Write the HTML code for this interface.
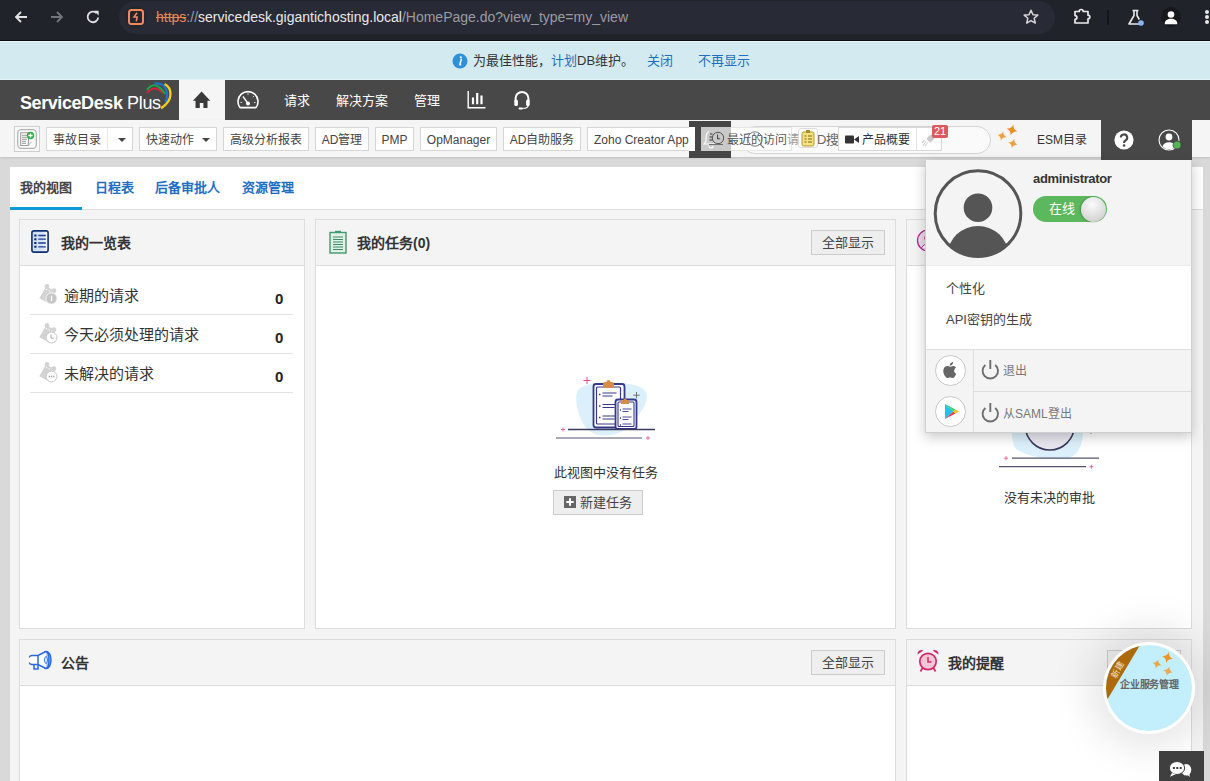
<!DOCTYPE html>
<html lang="zh-CN">
<head>
<meta charset="utf-8">
<style>
*{box-sizing:border-box;margin:0;padding:0}
html,body{width:1210px;height:781px;overflow:hidden}
body{position:relative;font-family:"Liberation Sans",sans-serif;font-size:13px;color:#333;background:#d9d9d9}
.a{position:absolute}
.ic{position:absolute;display:block}
/* browser bar */
#chrome{left:0;top:0;width:1210px;height:40px;background:#21232b}
#chrome-line{left:0;top:40px;width:1210px;height:1px;background:#0b0c0f}
#omni{left:119px;top:1px;width:936px;height:33px;border-radius:17px;background:#282a35}
#url{left:156px;top:8px;font-size:14px;color:#e8e8ea;white-space:nowrap;line-height:18px}
#url .o{color:#e8875a;text-decoration:line-through}
#url .g{color:#9a9ca3}
/* banner */
#banner{left:0;top:41px;width:1210px;height:39px;background:#d3ebf0;border-top:1px solid #e4f6fa;border-bottom:1px solid #e2f4f8}
.bt{top:52px;line-height:17px;font-size:13px;color:#333;white-space:nowrap}
.blue{color:#1e6fbf}
/* nav */
#nav{left:0;top:80px;width:1210px;height:40px;background:#484848}
#home{left:179px;top:80px;width:46px;height:40px;background:#f5f5f5}
.nt{top:93px;color:#fff;font-size:13px;line-height:16px;white-space:nowrap}
/* toolbar */
#tb{left:0;top:120px;width:1210px;height:37px;background:#f5f5f5;box-shadow:0 1px 2px rgba(0,0,0,.12)}
.btn{position:absolute;top:127px;height:24px;background:#fff;border:1px solid #d6d6d6;font-size:12px;color:#444;line-height:22px;white-space:nowrap;text-align:center}
.lat{letter-spacing:-0.4px;font-size:13px}
.cj{line-height:25px}
/* content */
#content{left:10px;top:209px;width:1193px;height:572px;background:#f4f4f4}
#tabs{left:10px;top:167px;width:1193px;height:43px;background:#fff;border-bottom:1px solid #dcdcdc}
.tab{top:180px;font-size:13px;font-weight:bold;line-height:16px;color:#1f6fc5;white-space:nowrap}
.panel{position:absolute;background:#fff;border:1px solid #dcdcdc}
.ph{position:absolute;left:0;top:0;right:0;height:46px;background:#f4f4f4;border-bottom:1px solid #dcdcdc}
.pt{position:absolute;font-size:14px;font-weight:bold;color:#333;line-height:17px;white-space:nowrap}
.rowt{font-size:15px;line-height:20px;color:#333;white-space:nowrap}
.rown{font-size:15px;font-weight:bold;line-height:20px;color:#222}
.ctr{font-size:13px;line-height:16px;color:#333;white-space:nowrap}
.sbtn{position:absolute;height:25px;background:#eee;border:1px solid #ccc;font-size:13px;line-height:23px;color:#444;text-align:center;white-space:nowrap}
</style>
</head>
<body>
<!-- Browser chrome -->
<div class="a" id="chrome"></div>
<div class="a" id="chrome-line"></div>
<div class="a" id="omni"></div>
<div class="a" id="url"><span class="o">https</span><span class="g">://</span>servicedesk.gigantichosting.local<span class="g">/HomePage.do?view_type=my_view</span></div>


<!-- chrome icons -->
<svg class="ic" style="left:13px;top:9px" width="16" height="16" viewBox="0 0 16 16"><path d="M14 8H3M8 3L3 8l5 5" fill="none" stroke="#e3e3e3" stroke-width="1.8"/></svg>
<svg class="ic" style="left:49px;top:9px" width="16" height="16" viewBox="0 0 16 16"><path d="M2 8h11M8 3l5 5-5 5" fill="none" stroke="#74767c" stroke-width="1.8"/></svg>
<svg class="ic" style="left:85px;top:9px" width="16" height="16" viewBox="0 0 16 16"><path d="M13.2 8.5A5.3 5.3 0 1 1 11.5 4" fill="none" stroke="#e3e3e3" stroke-width="1.8"/><path d="M9 1.8h4.6v4.6z" fill="#e3e3e3"/></svg>
<div class="a" style="left:125px;top:6px;width:22px;height:22px;border-radius:11px;background:#24262e"></div>
<svg class="ic" style="left:127px;top:8px" width="18" height="18" viewBox="0 0 18 18"><rect x="2" y="2" width="14" height="14" rx="2.5" fill="none" stroke="#ee8c5d" stroke-width="2"/><path d="M10 4.8L7 9h3.2l-1 4.4" fill="none" stroke="#ee8c5d" stroke-width="1.5"/></svg>
<svg class="ic" style="left:1022px;top:8px" width="18" height="18" viewBox="0 0 18 18"><path d="M9 2.2l2 4.5 4.8.4-3.6 3.2 1.1 4.8L9 12.6l-4.3 2.5 1.1-4.8-3.6-3.2 4.8-.4z" fill="none" stroke="#d6d6d8" stroke-width="1.5" stroke-linejoin="round"/></svg>
<svg class="ic" style="left:1073px;top:7px" width="18" height="19" viewBox="0 0 18 19"><path d="M2 4.5h4.2a2 2 0 0 1 4 0H15v3.7a1.8 1.8 0 0 1 0 3.6V16H2v-3.6a1.9 1.9 0 0 0 0-3.8z" fill="none" stroke="#eaeaea" stroke-width="1.7" stroke-linejoin="round"/></svg>
<div class="a" style="left:1107px;top:10px;width:2px;height:15px;background:#15161a"></div>
<svg class="ic" style="left:1127px;top:9px" width="18" height="17" viewBox="0 0 18 17"><path d="M5.5 1.5h6M7 1.5v5L2 15h10.5M10 1.5v5l2.3 4" fill="none" stroke="#eaeaea" stroke-width="1.6" stroke-linejoin="round"/><circle cx="14" cy="14" r="2.8" fill="#8ab4f8"/></svg>
<div class="a" style="left:1161px;top:7px;width:20px;height:20px;border-radius:10px;background:#17181c"></div>
<svg class="ic" style="left:1161px;top:7px" width="20" height="20" viewBox="0 0 20 20"><circle cx="10" cy="7.5" r="3.3" fill="#fff"/><path d="M3.8 16.2c0-3 3-4.5 6.2-4.5s6.2 1.5 6.2 4.5v1.1H3.8z" fill="#fff"/></svg>
<div class="a" style="left:1205px;top:10px;width:4px;height:4px;border-radius:2px;background:#eaeaea"></div>
<div class="a" style="left:1205px;top:15px;width:4px;height:4px;border-radius:2px;background:#eaeaea"></div>
<div class="a" style="left:1205px;top:20px;width:4px;height:4px;border-radius:2px;background:#eaeaea"></div>

<!-- Banner -->
<div class="a" id="banner"></div>
<div class="a bt" style="left:473px">为最佳性能，<span class="blue">计划</span>DB维护。</div>
<div class="a bt blue" style="left:647px">关闭</div>
<div class="a bt blue" style="left:698px">不再显示</div>

<svg class="ic" style="left:452px;top:53px" width="16" height="16" viewBox="0 0 16 16"><circle cx="8" cy="8" r="7.5" fill="#2f8fd8"/><circle cx="8.8" cy="4.3" r="1.1" fill="#fff"/><path d="M9.2 6.6L7.9 11.4c-.1.5.3.6.7.3" fill="none" stroke="#fff" stroke-width="1.6" stroke-linecap="round"/></svg>
<!-- Nav -->
<div class="a" id="nav"></div>
<div class="a" id="home"></div>
<div class="a nt" style="left:284px">请求</div>
<div class="a nt" style="left:336px">解决方案</div>
<div class="a nt" style="left:414px">管理</div>

<div class="a" style="left:20px;top:93px;font-size:18px;line-height:20px;color:#fff;white-space:nowrap;font-weight:bold;letter-spacing:-0.42px">ServiceDesk</div>
<div class="a" style="left:127px;top:93px;font-size:18px;line-height:20px;color:#fff;white-space:nowrap;letter-spacing:-0.3px">Plus</div>
<svg class="ic" style="left:140px;top:78px" width="40" height="34" viewBox="0 0 40 34"><path d="M7 14.9Q14.35 5.8 23.1 15.1" fill="none" stroke="#d0243a" stroke-width="2"/><path d="M7 11.9Q15.4 1.05 25.1 15.9" fill="none" stroke="#1aa64a" stroke-width="2"/><path d="M14.7 5.5C24 4.5 30 12 25.6 24.3" fill="none" stroke="#1f73cf" stroke-width="2.3"/><path d="M24.6 6C32 10 34 22 21.1 30.3" fill="none" stroke="#f3cf17" stroke-width="2.3"/></svg>
<svg class="ic" style="left:192px;top:91px" width="19" height="18" viewBox="0 0 19 18"><path d="M9.6 0.5L0.9 9.7h2.6V17h4.3v-5h3.6v5h4.1V9.7h2.8z" fill="#3a3a3a"/></svg>
<svg class="ic" style="left:237px;top:90px" width="22" height="20" viewBox="0 0 22 20"><path d="M3 17.6A10 10 0 1 1 19 17.6Z" fill="none" stroke="#fff" stroke-width="1.6" stroke-linejoin="round"/><path d="M6 6.5L11 13.5" stroke="#fff" stroke-width="1.3"/><circle cx="11" cy="13.5" r="2" fill="#fff"/><path d="M11 3.3v1.5M16.8 6.2l-.9.9M3.5 12.5h1.4M17.1 12.5h1.4" stroke="#fff" stroke-width="0.9"/></svg>
<svg class="ic" style="left:467px;top:90px" width="19" height="19" viewBox="0 0 19 19"><path d="M1.2 1V17.7H18.5" fill="none" stroke="#fff" stroke-width="1.4"/><path d="M6 7.4V14.3M10.2 3V14.3M14.5 5.4V14.3" stroke="#fff" stroke-width="2.2"/></svg>
<svg class="ic" style="left:513px;top:90px" width="18" height="20" viewBox="0 0 18 20"><path d="M2.6 11V8.3a6.4 6.4 0 0 1 12.8 0V11" fill="none" stroke="#fff" stroke-width="2"/><rect x="1.3" y="9.6" width="3.6" height="6.4" rx="1.6" fill="#fff"/><rect x="13.1" y="9.6" width="3.6" height="6.4" rx="1.6" fill="#fff"/><path d="M15.2 15.5c-.3 2-2.3 2.8-5 2.9" fill="none" stroke="#fff" stroke-width="1.3"/><rect x="5.5" y="17.4" width="4.5" height="2" rx="1" fill="#fff"/></svg>
<!-- Toolbar -->
<div class="a" id="tb"></div>
<div class="btn" style="left:14px;top:126px;width:26px;height:26px;background:#f8f8f8;border-color:#cfcfcf"></div>
<svg class="ic" style="left:17px;top:129px" width="20" height="20" viewBox="0 0 20 20"><rect x="0.7" y="0.7" width="18.6" height="18.6" rx="3.5" fill="#fbfbfb" stroke="#b4b4b4" stroke-width="1.3"/><path d="M3.7 3.8h8v6l-0.5 6.7H3.7z" fill="#fff" stroke="#9a9a9a" stroke-width="1.1"/><path d="M5 6.3h5M5 8.3h5M5 10.3h5M5 12.3h4M5 14.3h4" stroke="#8a8a8a" stroke-width="0.9"/><path d="M11.2 16.5l3.2-3.6" stroke="#aaa" stroke-width="0.9"/><circle cx="13.5" cy="6.5" r="3.7" fill="#2db14f"/><path d="M13.5 4.4v4.2M11.4 6.5h4.2" stroke="#fff" stroke-width="1.3"/></svg>
<div class="btn" style="left:46px;width:87px"><span style="position:absolute;left:6px;top:0;line-height:25px">事故目录</span></div>
<div class="a" style="left:107px;top:128px;width:1px;height:22px;background:#e8e8e8"></div>
<svg class="ic" style="left:118px;top:138px" width="8" height="4" viewBox="0 0 8 4"><path d="M0 0h8L4 4z" fill="#444"/></svg>
<div class="btn" style="left:139px;width:78px"><span style="position:absolute;left:6px;top:0;line-height:25px">快速动作</span></div>
<svg class="ic" style="left:202px;top:138px" width="8" height="4" viewBox="0 0 8 4"><path d="M0 0h8L4 4z" fill="#444"/></svg>
<div class="btn cj" style="left:223px;width:86px">高级分析报表</div>
<div class="btn cj" style="left:315px;width:54px">AD管理</div>
<div class="btn" style="left:375px;width:39px;line-height:24px">PMP</div>
<div class="btn" style="left:420px;width:77px;line-height:24px">OpManager</div>
<div class="btn cj" style="left:503px;width:78px">AD自助服务</div>
<div class="btn" style="left:587px;width:108px;text-align:left;padding-left:6px;line-height:24px">Zoho Creator App</div>
<div class="a" style="left:689px;top:121px;width:42px;height:37px;background:#454545"></div>
<div class="a" style="left:689px;top:127px;width:6px;height:24px;background:#fff"></div>
<div class="a" style="left:701px;top:127px;width:30px;height:24px;background:#c9c9c9"></div>
<svg class="ic" style="left:703px;top:129px" width="34" height="20" viewBox="0 0 34 20"><path d="M6 2.5c-2.5 1-3 4-3 7v3L1 15h14" fill="none" stroke="#fff" stroke-width="1.1"/><path d="M6 17a2 2 0 0 0 4 0" fill="none" stroke="#fff" stroke-width="1.1"/><path d="M7 5h2.5M6.5 8h3M6.5 11h3" stroke="#666" stroke-width="1.4"/><circle cx="15" cy="9" r="5.7" fill="none" stroke="#555" stroke-width="1"/><path d="M14.6 5.6v4.2h2.6" fill="none" stroke="#444" stroke-width="1.1"/><path d="M6 15.5h14" stroke="#555" stroke-width="0.8"/></svg>
<div class="a" style="left:741px;top:126px;width:250px;height:28px;border:1px solid #d4d4d4;border-radius:14px;background:#fafafa"></div>
<div class="a" style="left:731px;top:127px;width:61px;height:24px;background:#fff;border:1px solid #e6e6e6;border-left:none"></div>
<div class="a" style="left:727px;top:132px;font-size:12px;line-height:16px;color:#555;white-space:nowrap">最近的访问</div>
<svg class="ic" style="left:745px;top:129px" width="22" height="22" viewBox="0 0 22 22"><circle cx="10" cy="10" r="7.2" fill="none" stroke="#777" stroke-width="1"/><path d="M15 15l4 4" stroke="#777" stroke-width="1.2"/></svg>
<div class="a" style="left:787px;top:132px;font-size:12px;line-height:16px;color:#999;white-space:nowrap">请</div>
<div class="a" style="left:817px;top:132px;font-size:13px;line-height:16px;color:#666;white-space:nowrap">D搜</div>
<div class="a" style="left:798px;top:128px;width:20px;height:20px;background:#fff;border:1px solid #ddd;border-radius:3px"></div>
<svg class="ic" style="left:800px;top:129px" width="16" height="18" viewBox="0 0 16 18"><rect x="2" y="3" width="12" height="14" rx="1.5" fill="#f6e27a" stroke="#a88d2c" stroke-width="0.9"/><rect x="6" y="1" width="4" height="3" fill="#a88d2c"/><path d="M4.5 7h2M8 7h4M4.5 10h2M8 10h4M4.5 13h2M8 13h4" stroke="#6e5b1d" stroke-width="0.9"/></svg>
<div class="a" style="left:838px;top:127px;width:104px;height:24px;background:#fff;border:1px solid #d8d8d8"></div>
<div class="a" style="left:916px;top:128px;width:1px;height:22px;background:#e4e4e4"></div>
<svg class="ic" style="left:845px;top:135px" width="14" height="9" viewBox="0 0 14 9"><rect x="0" y="0.5" width="9" height="8" rx="1" fill="#333"/><path d="M9 4.5l5-3.5v7z" fill="#333"/></svg>
<div class="a" style="left:862px;top:132px;font-size:12px;line-height:16px;color:#333;white-space:nowrap">产品概要</div>
<svg class="ic" style="left:921px;top:132px" width="16" height="16" viewBox="0 0 16 16"><path d="M13 2c-3 0-6 2-7.5 5l3.5 3.5C12 9 14 6 14 3z" fill="#c8c8c8"/><path d="M5 9l-3 5M6.5 10.5l-2.5 4M3.5 8l-2.5 3" stroke="#d6d6d6" stroke-width="1.2"/></svg>
<div class="a" style="left:932px;top:125px;width:16px;height:13px;background:#dc5a5a;border-radius:2px;color:#fff;font-size:11px;line-height:13px;text-align:center">21</div>
<svg class="ic" style="left:990px;top:120px" width="34" height="34" viewBox="0 0 34 34"><path transform="translate(22,10) rotate(15)" d="M0 -5.6Q0.78 -0.78 5.6 0Q0.78 0.78 0 5.6Q-0.78 0.78 -5.6 0Q-0.78 -0.78 0 -5.6Z" fill="#ee8e1c"/><path transform="translate(12,16) rotate(15)" d="M0 -4.8Q0.67 -0.67 4.8 0Q0.67 0.67 0 4.8Q-0.67 0.67 -4.8 0Q-0.67 -0.67 0 -4.8Z" fill="#f0a040"/><path transform="translate(23,23.5) rotate(15)" d="M0 -5Q0.70 -0.70 5 0Q0.70 0.70 0 5Q-0.70 0.70 -5 0Q-0.70 -0.70 0 -5Z" fill="#f0a040"/></svg>
<div class="a" style="left:1037px;top:132px;font-size:12px;line-height:16px;color:#333;white-space:nowrap">ESM目录</div>
<div class="a" style="left:1101px;top:80px;width:91px;height:80px;background:#484848"></div>
<svg class="ic" style="left:1114px;top:130px" width="20" height="20" viewBox="0 0 20 20"><circle cx="10" cy="10" r="9.6" fill="#fff"/><path d="M6.8 7.6a3.2 3.2 0 1 1 4.6 2.9c-.9.5-1.3 1-1.3 2v.6" fill="none" stroke="#484848" stroke-width="2.1"/><circle cx="10.1" cy="15.5" r="1.3" fill="#484848"/></svg>
<svg class="ic" style="left:1157px;top:128px" width="26" height="26" viewBox="0 0 26 26"><circle cx="12" cy="12" r="10" fill="none" stroke="#fff" stroke-width="1.1"/><circle cx="12" cy="9" r="3.4" fill="#fff"/><path d="M5.5 18.5c1-3 3.5-4.3 6.5-4.3s5.5 1.3 6.5 4.3A9 9 0 0 1 5.5 18.5z" fill="#fff"/><circle cx="20" cy="17" r="4.4" fill="#484848"/><circle cx="20" cy="17" r="3.6" fill="#4fb852"/></svg>


<!-- Content -->
<div class="a" id="content"></div>
<div class="a" id="tabs"></div>
<div class="a" style="left:10px;top:207px;width:72px;height:3px;background:#0e9ad8"></div>
<div class="a tab" style="left:20px;color:#444">我的视图</div>
<div class="a tab" style="left:95px">日程表</div>
<div class="a tab" style="left:155px">后备审批人</div>
<div class="a tab" style="left:242px">资源管理</div>

<!-- Panel 1 -->
<div class="panel" style="left:19px;top:219px;width:286px;height:410px">
 <div class="ph"></div>
</div>
<svg class="ic" style="left:31px;top:230px" width="18" height="23" viewBox="0 0 18 23"><defs><linearGradient id="lg1" x1="0" x2="1"><stop offset="0" stop-color="#c9dbf5"/><stop offset="0.7" stop-color="#dae6f8"/><stop offset="1" stop-color="#fff"/></linearGradient></defs><rect x="0.9" y="0.9" width="16.2" height="21.2" rx="2" fill="url(#lg1)" stroke="#10306f" stroke-width="1.6"/><path d="M3.3 5.5h2.2M3.3 9.2h2.2M3.3 13h2.2M3.3 16.8h2.2" stroke="#0d2a7a" stroke-width="2"/><path d="M7.3 5.5h7.5M7.3 9.2h7.5M7.3 13h7.5M7.3 16.8h7.5" stroke="#173e94" stroke-width="1.3"/></svg>
<div class="pt" style="left:61px;top:235px">我的一览表</div>
<div class="a" style="left:30px;top:314px;width:263px;height:1px;background:#e3e3e3"></div>
<div class="a" style="left:30px;top:353px;width:263px;height:1px;background:#e3e3e3"></div>
<div class="a" style="left:30px;top:392px;width:263px;height:1px;background:#e3e3e3"></div>
<div class="a rowt" style="left:64px;top:286px">逾期的请求</div>
<div class="a rowt" style="left:64px;top:325px">今天必须处理的请求</div>
<div class="a rowt" style="left:64px;top:364px">未解决的请求</div>
<div class="a rown" style="left:275px;top:289px">0</div>
<div class="a rown" style="left:275px;top:328px">0</div>
<div class="a rown" style="left:275px;top:367px">0</div>
<svg class="ic" style="left:34px;top:280px" width="30" height="30" viewBox="0 0 30 30"><path d="M12.2 6.2L21.5 11.6L15.6 23.8L5.3 18.2Z" fill="#d3d3d3"/><circle cx="13" cy="6.2" r="2.3" fill="#d3d3d3"/><circle cx="20" cy="10.6" r="2.3" fill="#d3d3d3"/><path d="M12 9.3L19.5 13.2" stroke="#fff" stroke-width="1" stroke-dasharray="1.4 1.6"/><circle cx="17.5" cy="18.5" r="5.6" fill="#c6c6c6" stroke="#fff" stroke-width="0.8"/><path d="M17.5 15.6v5.6" stroke="#fff" stroke-width="1.3"/></svg>
<svg class="ic" style="left:34px;top:319px" width="30" height="30" viewBox="0 0 30 30"><path d="M12.2 6.2L21.5 11.6L15.6 23.8L5.3 18.2Z" fill="#d3d3d3"/><circle cx="13" cy="6.2" r="2.3" fill="#d3d3d3"/><circle cx="20" cy="10.6" r="2.3" fill="#d3d3d3"/><path d="M12 9.3L19.5 13.2" stroke="#fff" stroke-width="1" stroke-dasharray="1.4 1.6"/><circle cx="17.5" cy="18.5" r="5.4" fill="#fff" stroke="#c6c6c6" stroke-width="1"/><path d="M17 15.5v3.6h2.6" fill="none" stroke="#aaa" stroke-width="1"/></svg>
<svg class="ic" style="left:34px;top:358px" width="30" height="30" viewBox="0 0 30 30"><path d="M12.2 6.2L21.5 11.6L15.6 23.8L5.3 18.2Z" fill="#d3d3d3"/><circle cx="13" cy="6.2" r="2.3" fill="#d3d3d3"/><circle cx="20" cy="10.6" r="2.3" fill="#d3d3d3"/><path d="M12 9.3L19.5 13.2" stroke="#fff" stroke-width="1" stroke-dasharray="1.4 1.6"/><circle cx="17.5" cy="18.5" r="5.4" fill="#fff" stroke="#c6c6c6" stroke-width="1"/><path d="M14.8 18.5h1.2M17 18.5h1.2M19.2 18.5h1.2" stroke="#999" stroke-width="1.3"/></svg>

<!-- Panel 2 -->
<div class="panel" style="left:315px;top:219px;width:581px;height:410px">
 <div class="ph"></div>
</div>
<svg class="ic" style="left:329px;top:229px" width="18" height="25" viewBox="0 0 18 25"><rect x="1" y="3.5" width="16" height="20.5" fill="#dff0e6" stroke="#3f9a6e" stroke-width="1.4"/><path d="M6 4V1.8h6V4z" fill="#3f9a6e"/><path d="M4 8h10M4 10.5h10M4 13h10M4 15.5h10M4 18h10M4 20.5h10" stroke="#3f8a65" stroke-width="1.1"/></svg>
<div class="pt" style="left:357px;top:235px">我的任务(0)</div>
<div class="sbtn" style="left:811px;top:230px;width:74px">全部显示</div>
<svg class="ic" style="left:550px;top:370px" width="110" height="75" viewBox="550 370 110 75">
<path d="M578 390c8-8 28-8 42-7 18 1 28 6 27 14-1 12-12 22-20 30-6 7-18 10-28 8-12-2-18-12-21-24-2-8-3-15 0-21z" fill="#dcf0fb"/>
<rect x="593.5" y="384" width="31" height="43.5" rx="2.5" fill="#fff" stroke="#34398c" stroke-width="1.8"/>
<rect x="596.5" y="387" width="24" height="37" rx="1" fill="#fff" stroke="#34398c" stroke-width="1.2"/>
<path d="M603 388v-4a2 2 0 0 1 2-2h1.5a2 2 0 0 1 4 0h1.5a2 2 0 0 1 2 2v4z" fill="#d48e45"/>
<path d="M599 394.5h1.5M599 406h1.5M599 417.5h1.5" stroke="#34398c" stroke-width="1.6"/>
<path d="M602.5 393h14M602.5 396h10M602.5 404.5h14M602.5 407.5h12M602.5 416h14M602.5 419h12" stroke="#34398c" stroke-width="1"/>
<rect x="615.5" y="399.5" width="21" height="29.5" rx="2.5" fill="#fff" stroke="#34398c" stroke-width="1.8"/>
<rect x="618" y="402" width="16" height="24.5" rx="1" fill="#fff" stroke="#34398c" stroke-width="1.1"/>
<path d="M621 404v-2.5a1.5 1.5 0 0 1 1.5-1.5h1a1.5 1.5 0 0 1 3 0h1a1.5 1.5 0 0 1 1.5 1.5v2.5z" fill="#d48e45"/>
<path d="M620 410h1M620 418h1M620 425h1" stroke="#34398c" stroke-width="1.3"/>
<path d="M622.5 409h9M622.5 411.5h6M622.5 417h9M622.5 419.5h6M622.5 424h9" stroke="#34398c" stroke-width="0.9"/>
<path d="M568 429.5h87" stroke="#3b3a5c" stroke-width="1.3"/>
<path d="M556 438h86" stroke="#8f8ea5" stroke-width="1.4"/>
<path d="M587 377v7M583.5 380.5h7" stroke="#e8488a" stroke-width="1"/>
<path d="M563 427.5v4M561 429.5h4" stroke="#e8488a" stroke-width="0.8"/>
<path d="M648 436v4M646 438h4" stroke="#e8488a" stroke-width="0.8"/>
<path d="M636.5 392v6.5M633.3 395.2h6.5" stroke="#555" stroke-width="0.8"/>
</svg>
<div class="a ctr" style="left:554px;top:465px">此视图中没有任务</div>
<div class="sbtn" style="left:553px;top:490px;width:90px;height:25px;text-align:left;padding-left:26px">新建任务</div>
<svg class="ic" style="left:564px;top:496px" width="12" height="12" viewBox="0 0 12 12"><rect width="12" height="12" fill="#666"/><path d="M6 2.3v7.4M2.3 6h7.4" stroke="#fff" stroke-width="2"/></svg>

<!-- Panel 3 -->
<div class="panel" style="left:906px;top:219px;width:286px;height:410px">
 <div class="ph"></div>
</div>
<svg class="ic" style="left:916px;top:229px" width="24" height="24" viewBox="0 0 24 24"><circle cx="12" cy="11.5" r="10.5" fill="#e6dbe6" stroke="#b0208f" stroke-width="1.2"/><circle cx="12" cy="9" r="3.3" fill="#fff" stroke="#b0208f" stroke-width="1"/><path d="M5.5 19c1.5-3 4-4 6.5-4s5 1 6.5 4" fill="#fff" stroke="#b0208f" stroke-width="1"/></svg>
<svg class="ic" style="left:995px;top:395px" width="110" height="75" viewBox="995 395 110 75">
<path d="M1016 420c6-8 30-8 50-6 15 1 18 10 17 20-1 12-5 24-20 25-15 1-32-2-44-8-8-4-9-20-3-31z" fill="#dcf0fb"/>
<circle cx="1049.8" cy="425.5" r="24.5" fill="#e9e7f0" stroke="#3b3a5c" stroke-width="1.6"/>
<path d="M1043 407l6 5 6-5" fill="none" stroke="#3b3a5c" stroke-width="1.4"/>
<path d="M1012 458.2h87" stroke="#55546e" stroke-width="1.2"/>
<path d="M999 466.7h87" stroke="#55546e" stroke-width="1.2"/>
<path d="M1006 456.2v4M1004 458.2h4" stroke="#e8488a" stroke-width="0.8"/>
<path d="M1091.4 464.7v4M1089.4 466.7h4" stroke="#e8488a" stroke-width="0.8"/>
<path d="M1091 429v5M1088.5 431.5h5" stroke="#666" stroke-width="0.7"/>
</svg>
<div class="a ctr" style="left:1004px;top:490px">没有未决的审批</div>

<!-- Panel 4 -->
<div class="panel" style="left:19px;top:639px;width:877px;height:160px">
 <div class="ph"></div>
</div>
<svg class="ic" style="left:29px;top:649px" width="25" height="22" viewBox="0 0 25 22"><path d="M17 2.5c3 0 5 3.8 5 8.5s-2 8.5-5 8.5" fill="#b9d4fb" stroke="#2a6ae0" stroke-width="1.5"/><ellipse cx="17" cy="11" rx="3" ry="8.5" fill="#b9d4fb" stroke="#2a6ae0" stroke-width="1.5"/><path d="M17 2.5L9 6.5H3.5a2.5 2.5 0 0 0 0 9H9l8 4" fill="#fff" stroke="#2a6ae0" stroke-width="1.5"/><path d="M5 15.5v4.5h4v-4.5M9 6.5v9" fill="none" stroke="#2a6ae0" stroke-width="1.5"/><ellipse cx="17" cy="11" rx="1.4" ry="3.5" fill="#fff" stroke="#2a6ae0" stroke-width="1"/></svg>
<div class="pt" style="left:61px;top:655px">公告</div>
<div class="sbtn" style="left:811px;top:650px;width:74px">全部显示</div>

<!-- Panel 5 -->
<div class="panel" style="left:906px;top:639px;width:286px;height:160px">
 <div class="ph"></div>
</div>
<svg class="ic" style="left:916px;top:649px" width="24" height="24" viewBox="0 0 24 24"><circle cx="12" cy="12.5" r="8.2" fill="#f5c6d6" stroke="#d2286a" stroke-width="1.7"/><path d="M12 8v5h3.5" fill="none" stroke="#d2286a" stroke-width="1.5"/><path d="M1.5 5.5a4 4 0 0 1 6-4zM22.5 5.5a4 4 0 0 0-6-4z" fill="#d2286a"/><path d="M6.5 19l-2 3.5M17.5 19l2 3.5" stroke="#d2286a" stroke-width="1.7"/></svg>
<div class="pt" style="left:948px;top:655px">我的提醒</div>
<div class="sbtn" style="left:1107px;top:650px;width:74px"></div>


<!-- Popup -->
<div class="a" style="left:925px;top:160px;width:267px;height:273px;background:#fff;border:1px solid #cfcfcf;border-top:none;box-shadow:0 4px 12px rgba(0,0,0,.22)"></div>
<div class="a" style="left:926px;top:160px;width:265px;height:106px;background:#f4f4f4;border-bottom:1px solid #ececec"></div>
<svg class="ic" style="left:932px;top:168px" width="92" height="92" viewBox="0 0 92 92"><defs><clipPath id="avc"><circle cx="46" cy="45.6" r="42.5"/></clipPath></defs><circle cx="46" cy="39.7" r="14.3" fill="#555"/><ellipse cx="46" cy="86" rx="30" ry="28" fill="#555" clip-path="url(#avc)"/><circle cx="46" cy="45.6" r="42.8" fill="none" stroke="#555" stroke-width="3"/></svg>
<div class="a" style="left:1033px;top:171px;font-size:13px;font-weight:bold;line-height:16px;color:#333;letter-spacing:-0.35px">administrator</div>
<div class="a" style="left:1033px;top:196px;width:74px;height:26px;border-radius:13px;background:#5cb85c"></div>
<div class="a" style="left:1049px;top:200px;font-size:13px;line-height:18px;color:#fff">在线</div>
<div class="a" style="left:1081px;top:196.5px;width:25px;height:25px;border-radius:13px;background:radial-gradient(circle at 45% 30%,#fbfbfb,#d6d6d6 70%,#bdbdbd);box-shadow:-1px 0 2px rgba(0,0,0,.25)"></div>
<div class="a" style="left:946px;top:280px;font-size:13px;line-height:17px;color:#444">个性化</div>
<div class="a" style="left:946px;top:311px;font-size:13px;line-height:17px;color:#444">API密钥的生成</div>
<div class="a" style="left:926px;top:349px;width:265px;height:83px;background:#f4f4f4;border-top:1px solid #dedede"></div>
<div class="a" style="left:973px;top:350px;width:1px;height:82px;background:#dedede"></div>
<div class="a" style="left:974px;top:391px;width:217px;height:1px;background:#dedede"></div>
<div class="a" style="left:935px;top:355px;width:31px;height:31px;border-radius:16px;background:#fff;border:1px solid #c8c8c8"></div>
<svg class="ic" style="left:942px;top:361px" width="17" height="18" viewBox="0 0 17 18"><path d="M12.3 9.6c0-2 1.7-3 1.8-3.1-1-1.4-2.5-1.6-3-1.6-1.3-.1-2.5.8-3.1.8-.7 0-1.7-.8-2.7-.7C3.9 5 2.7 5.8 2 7c-1.4 2.5-.4 6.1 1 8.1.7 1 1.4 2 2.5 2 1 0 1.4-.7 2.6-.7s1.5.7 2.6.6c1.1 0 1.8-1 2.4-2 .8-1.1 1.1-2.2 1.1-2.3 0 0-2.2-.8-2.2-3.1zM10.2 3.6c.6-.7 1-1.6.8-2.6-.8 0-1.8.6-2.4 1.3-.5.6-1 1.6-.8 2.5.9.1 1.8-.5 2.4-1.2z" fill="#666"/></svg>
<div class="a" style="left:935px;top:396px;width:31px;height:31px;border-radius:16px;background:#fff;border:1px solid #c8c8c8"></div>
<svg class="ic" style="left:944px;top:403px" width="16" height="17" viewBox="0 0 16 17"><path d="M1 1l8.2 7.5L1 16z" fill="#1ec3f0"/><path d="M1 1l10.5 5.4-2.3 2.1z" fill="#3bd16f"/><path d="M1 16l10.5-5.4-2.3-2.1z" fill="#ef3d4b"/><path d="M11.5 6.4l3.5 2.1-3.5 2.1-2.3-2.1z" fill="#ffc21a"/></svg>
<svg class="ic" style="left:980px;top:359px" width="21" height="21" viewBox="0 0 21 21"><path d="M5.4 5.9A7.7 7.7 0 1 0 15.2 5.9" fill="none" stroke="#6e6e6e" stroke-width="1.9"/><path d="M10.3 1V10" stroke="#6e6e6e" stroke-width="1.9"/></svg>
<div class="a" style="left:1003px;top:363px;font-size:12px;line-height:16px;color:#777">退出</div>
<svg class="ic" style="left:980px;top:402px" width="21" height="21" viewBox="0 0 21 21"><path d="M5.4 5.9A7.7 7.7 0 1 0 15.2 5.9" fill="none" stroke="#6e6e6e" stroke-width="1.9"/><path d="M10.3 1V10" stroke="#6e6e6e" stroke-width="1.9"/></svg>
<div class="a" style="left:1003px;top:406px;font-size:12px;line-height:16px;color:#777">从SAML登出</div>

<!-- Floating ESM -->
<div class="a" style="left:1103px;top:642px;width:92px;height:92px;border-radius:46px;background:#fff;box-shadow:0 0 40px 14px rgba(0,0,0,.10)"></div>
<svg class="ic" style="left:1106px;top:645px" width="86" height="86" viewBox="0 0 86 86"><defs><clipPath id="esc"><circle cx="43" cy="43" r="43"/></clipPath></defs><circle cx="43" cy="43" r="43" fill="#c3effc"/><path d="M-20 90L48.9 -24.75H-20Z" fill="#ad6a0c" clip-path="url(#esc)"/><text transform="translate(9.5,34) rotate(-60)" font-size="8.5" fill="#f3e3c8" font-family="Liberation Sans">新建</text><path transform="translate(61.5,12.5) rotate(15)" d="M0 -5.6Q0.78 -0.78 5.6 0Q0.78 0.78 0 5.6Q-0.78 0.78 -5.6 0Q-0.78 -0.78 0 -5.6Z" fill="#ee9424"/><path transform="translate(51,19) rotate(15)" d="M0 -4.8Q0.67 -0.67 4.8 0Q0.67 0.67 0 4.8Q-0.67 0.67 -4.8 0Q-0.67 -0.67 0 -4.8Z" fill="#eaa84c"/><path transform="translate(62,26.3) rotate(15)" d="M0 -5.2Q0.73 -0.73 5.2 0Q0.73 0.73 0 5.2Q-0.73 0.73 -5.2 0Q-0.73 -0.73 0 -5.2Z" fill="#e9ad5a"/></svg>
<div class="a" style="left:1120px;top:678px;font-size:10px;line-height:13px;color:#666;white-space:nowrap;font-weight:bold;letter-spacing:-0.2px">企业服务管理</div>

<!-- Chat -->
<div class="a" style="left:1159px;top:751px;width:45px;height:30px;background:#3f3f3f"></div>
<svg class="ic" style="left:1168px;top:760px" width="24" height="18" viewBox="0 0 24 18"><ellipse cx="18.3" cy="9.8" rx="5" ry="5.8" fill="#fff"/><path d="M18 14l4 3-1-4z" fill="#fff"/><ellipse cx="9" cy="8" rx="7.6" ry="6.5" fill="#fff" stroke="#3f3f3f" stroke-width="1"/><path d="M4 13l-2 3.8 6-2.8z" fill="#fff"/><rect x="4.9" y="7" width="2" height="2" fill="#3f3f3f"/><rect x="8.3" y="7" width="2" height="2" fill="#3f3f3f"/><rect x="11.7" y="7" width="2" height="2" fill="#3f3f3f"/></svg>

</body>
</html>
